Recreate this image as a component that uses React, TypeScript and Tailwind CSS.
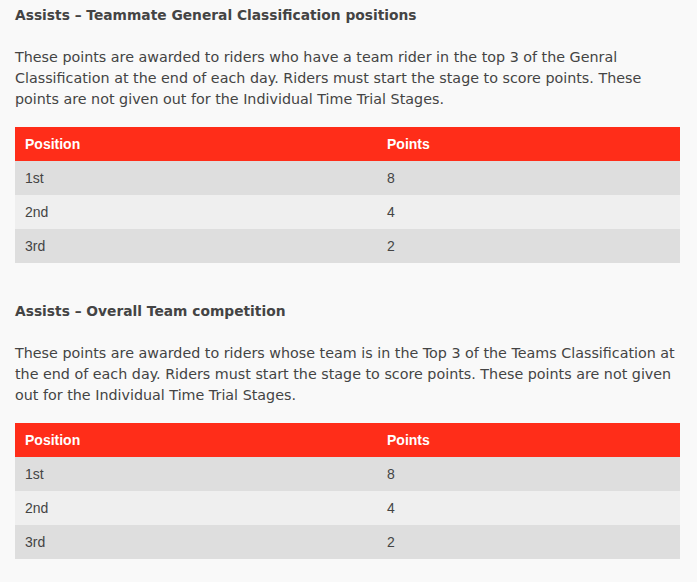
import React from 'react';

const ROWS = [
  { pos: '1st', pts: '8' },
  { pos: '2nd', pts: '4' },
  { pos: '3rd', pts: '2' },
];

function PointsTable() {
  return (
    <table className="w-full border-collapse font-['Liberation_Sans',Arial,sans-serif] text-[14px]">
      <thead>
        <tr className="bg-[#ff2d19] text-white">
          <th className="h-[34px] w-[362px] pl-[10px] text-left font-bold">Position</th>
          <th className="h-[34px] pl-[10px] text-left font-bold">Points</th>
        </tr>
      </thead>
      <tbody className="text-[#444]">
        {ROWS.map((r, i) => (
          <tr key={r.pos} className={i % 2 === 0 ? 'bg-[#dedede]' : 'bg-[#efefef]'}>
            <td className="h-[34px] pl-[10px]">{r.pos}</td>
            <td className="h-[34px] pl-[10px]">{r.pts}</td>
          </tr>
        ))}
      </tbody>
    </table>
  );
}

export default function App() {
  return (
    <div className="min-h-screen bg-[#f9f9f9] px-[15px] pr-[17px] pt-[5px] font-['DejaVu_Sans',Verdana,sans-serif] text-[#444]">
      <h3 className="text-[13.8px] font-bold leading-[21px]">Assists – Teammate General Classification positions</h3>
      <p className="mt-[21px] text-[14.3px] leading-[21px]">
        These points are awarded to riders who have a team rider in the top 3 of the Genral Classification at the end of each day. Riders must start the stage to score points. These points are not given out for the Individual Time Trial Stages.
      </p>
      <div className="mt-[17px]">
        <PointsTable />
      </div>
      <h3 className="mt-[38px] text-[13.8px] font-bold leading-[21px]">Assists – Overall Team competition</h3>
      <p className="mt-[21px] text-[14.3px] leading-[21px]">
        These points are awarded to riders whose team is in the Top 3 of the Teams Classification at the end of each day. Riders must start the stage to score points. These points are not given out for the Individual Time Trial Stages.
      </p>
      <div className="mt-[17px]">
        <PointsTable />
      </div>
    </div>
  );
}
